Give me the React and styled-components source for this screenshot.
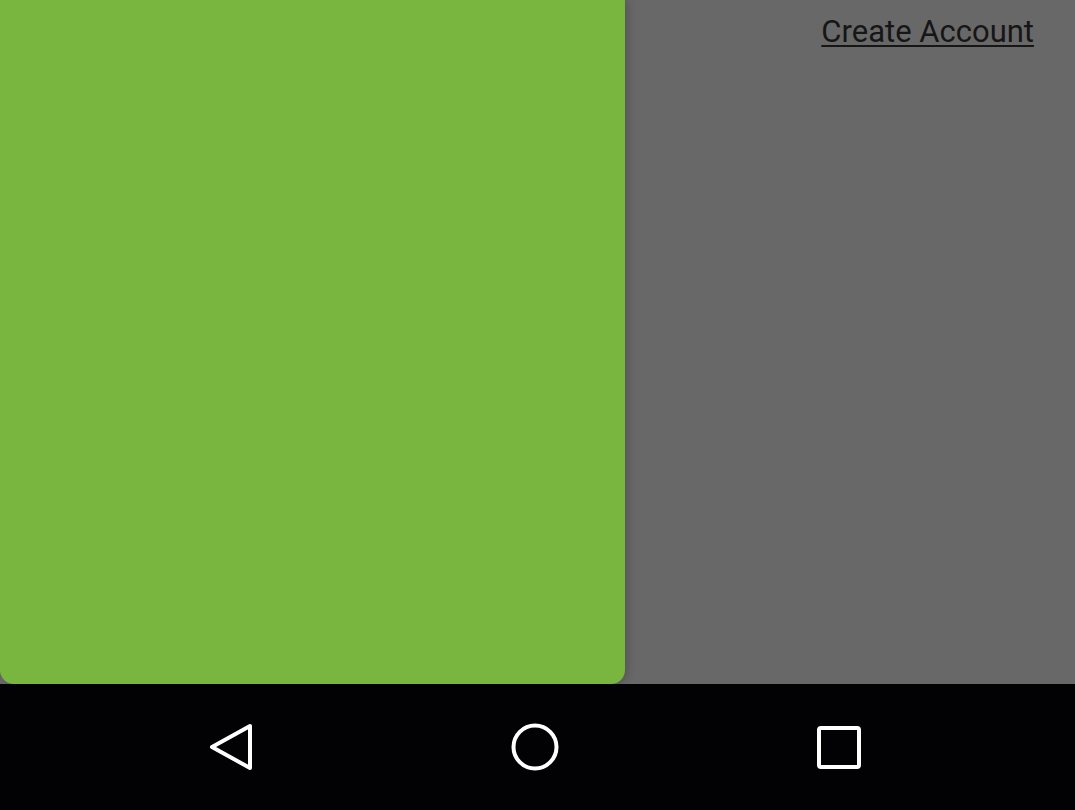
import React from "react";
import styled, { createGlobalStyle } from "styled-components";

const GlobalStyle = createGlobalStyle`
  html, body {
    margin: 0;
    padding: 0;
    background: #000;
    font-family: Roboto, "Liberation Sans", sans-serif;
  }
`;

const Screen = styled.div`
  width: 1075px;
  height: 810px;
  display: flex;
  flex-direction: column;
  overflow: hidden;
`;

const Main = styled.div`
  height: 684px;
  display: flex;
  background-color: #686868;
`;

const Panel = styled.div`
  width: 625px;
  background-color: #78b640;
  border-radius: 0 0 14px 14px;
  box-shadow: 3px 0 8px rgba(0, 0, 0, 0.18);
`;

const Side = styled.div`
  flex: 1;
  display: flex;
  justify-content: flex-end;
  align-items: flex-start;
  padding: 12px 41px 0 0;
`;

const Link = styled.a`
  font-size: 31px;
  line-height: 40px;
  color: #161616;
  text-decoration: underline;
  text-decoration-thickness: 2px;
  text-underline-offset: 3px;
  cursor: pointer;
`;

const NavBar = styled.nav`
  flex: 1;
  background-color: #020205;
  display: flex;
  justify-content: center;
  align-items: center;
  gap: 256px;
  padding-right: 5px;
`;

const NavButton = styled.button`
  width: 48px;
  height: 48px;
  padding: 0;
  border: none;
  background: none;
  display: flex;
  align-items: center;
  justify-content: center;
`;

function App() {
  return (
    <Screen>
      <GlobalStyle />
      <Main>
        <Panel />
        <Side>
          <Link>Create Account</Link>
        </Side>
      </Main>
      <NavBar>
        <NavButton aria-label="Back">
          <svg width="48" height="48" viewBox="0 0 48 48" fill="none">
            <path d="M43 3 L43 45 L5 24 Z" stroke="#fff" strokeWidth="4" strokeLinejoin="round" />
          </svg>
        </NavButton>
        <NavButton aria-label="Home">
          <svg width="48" height="48" viewBox="0 0 48 48" fill="none">
            <circle cx="24" cy="24" r="21.5" stroke="#fff" strokeWidth="4" />
          </svg>
        </NavButton>
        <NavButton aria-label="Recent">
          <svg width="48" height="48" viewBox="0 0 48 48" fill="none">
            <rect x="4" y="5" width="40" height="39" rx="2" stroke="#fff" strokeWidth="4" />
          </svg>
        </NavButton>
      </NavBar>
    </Screen>
  );
}

export default App;
